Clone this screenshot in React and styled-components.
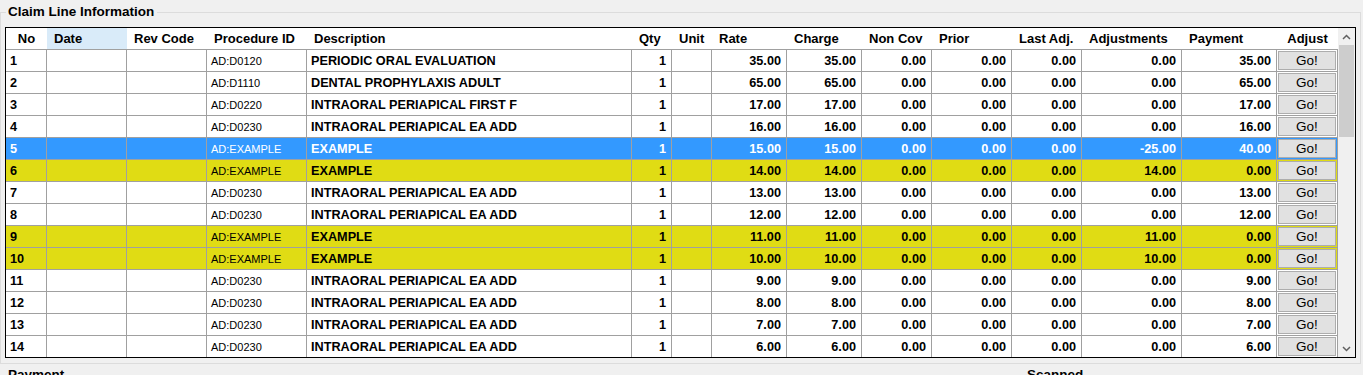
import React from "react";
import styled, { createGlobalStyle, css } from "styled-components";

const GlobalStyle = createGlobalStyle`
  html, body { margin: 0; padding: 0; }
  body {
    background: #f0f0f0;
    overflow: hidden;
    width: 1363px;
    height: 375px;
    font-family: "Liberation Sans", Arial, sans-serif;
    color: #000;
  }
`;

const COLS = "41px 80px 80px 100px 325px 40px 40px 75px 75px 70px 80px 70px 100px 95px 61px";

const Page = styled.div`
  display: flex;
  flex-direction: column;
`;

const GroupBox = styled.fieldset`
  margin: 4px 2px 0 0;
  padding: 7px 0 5px 4px;
  border: 1px solid #dcdcdc;
  min-width: 0;
`;

const Legend = styled.legend`
  margin-left: 1px;
  padding: 0 3px 0 2px;
  font-size: 13.5px;
  font-weight: bold;
  line-height: 16px;
`;

const GridFrame = styled.div`
  box-sizing: border-box;
  width: 1351px;
  height: 331px;
  border: 1px solid #000;
  background: #fff;
  display: flex;
  overflow: hidden;
`;

const Table = styled.div`
  width: 1332px;
  display: flex;
  flex-direction: column;
`;

const Row = styled.div`
  display: grid;
  grid-template-columns: ${COLS};
  height: 22px;
  flex: none;
  background: #fff;
  color: #000;
  ${(p) =>
    p.$variant === "selected" &&
    css`
      background: #3399ff;
      color: #fff;
    `}
  ${(p) =>
    p.$variant === "flagged" &&
    css`
      background: #e0dc14;
    `}
`;

const HeaderRow = styled.div`
  display: grid;
  grid-template-columns: ${COLS};
  height: 22px;
  flex: none;
  background: #fff;
`;

const HeaderCell = styled.div`
  box-sizing: border-box;
  border-bottom: 1px solid #a0a0a0;
  display: flex;
  align-items: center;
  justify-content: ${(p) => (p.$center ? "center" : "flex-start")};
  padding-left: ${(p) => (p.$center ? "0" : "7px")};
  font-size: 13px;
  font-weight: bold;
  white-space: nowrap;
  background: ${(p) => (p.$hover ? "#d9ebf9" : "transparent")};
`;

const Cell = styled.div`
  box-sizing: border-box;
  border-right: 1px solid #a0a0a0;
  border-bottom: 1px solid #a0a0a0;
  display: flex;
  align-items: center;
  justify-content: ${(p) => (p.$right ? "flex-end" : "flex-start")};
  padding: 0 5px 0 4px;
  font-size: ${(p) => (p.$small ? "11px" : "12.7px")};
  font-weight: ${(p) => (p.$small ? "normal" : "bold")};
  white-space: nowrap;
  overflow: hidden;
`;

const ButtonCell = styled.div`
  box-sizing: border-box;
  border-right: 1px solid #a0a0a0;
  border-bottom: 1px solid #a0a0a0;
  padding: 1px;
  display: flex;
`;

const GoButton = styled.button`
  flex: 1;
  margin: 0;
  padding: 0;
  border: 1px solid #adadad;
  background: #e1e1e1;
  font-family: "Liberation Sans", Arial, sans-serif;
  font-size: 13.5px;
  color: #000;
  line-height: 1;
`;

const ScrollBar = styled.div`
  width: 17px;
  flex: none;
  background: #f0f0f0;
  display: flex;
  flex-direction: column;
`;

const ScrollArrow = styled.div`
  height: 17px;
  flex: none;
  display: flex;
  align-items: center;
  justify-content: center;
`;

const Track = styled.div`
  flex: 1;
  display: flex;
  flex-direction: column;
`;

const Thumb = styled.div`
  margin: 0 1px;
  height: 92px;
  background: #cdcdcd;
`;

const BottomRow = styled.div`
  display: flex;
  gap: 4px;
  margin-top: 3px;
  margin-right: 2px;
`;

const BottomBox = styled.fieldset`
  margin: 0;
  padding: 0 0 0 4px;
  border: 1px solid #dcdcdc;
  height: 40px;
  min-width: 0;
  flex: ${(p) => (p.$grow ? 1 : "none")};
  width: ${(p) => p.$width || "auto"};
`;

const columns = [
  { label: "No", center: true },
  { label: "Date", hover: true },
  { label: "Rev Code" },
  { label: "Procedure ID" },
  { label: "Description" },
  { label: "Qty" },
  { label: "Unit" },
  { label: "Rate" },
  { label: "Charge" },
  { label: "Non Cov" },
  { label: "Prior" },
  { label: "Last Adj." },
  { label: "Adjustments" },
  { label: "Payment" },
  { label: "Adjust", center: true },
];

const rows = [
  ["AD:D0120", "PERIODIC ORAL EVALUATION", "35.00", "0.00", "35.00"],
  ["AD:D1110", "DENTAL PROPHYLAXIS ADULT", "65.00", "0.00", "65.00"],
  ["AD:D0220", "INTRAORAL PERIAPICAL FIRST F", "17.00", "0.00", "17.00"],
  ["AD:D0230", "INTRAORAL PERIAPICAL EA ADD", "16.00", "0.00", "16.00"],
  ["AD:EXAMPLE", "EXAMPLE", "15.00", "-25.00", "40.00", "selected"],
  ["AD:EXAMPLE", "EXAMPLE", "14.00", "14.00", "0.00", "flagged"],
  ["AD:D0230", "INTRAORAL PERIAPICAL EA ADD", "13.00", "0.00", "13.00"],
  ["AD:D0230", "INTRAORAL PERIAPICAL EA ADD", "12.00", "0.00", "12.00"],
  ["AD:EXAMPLE", "EXAMPLE", "11.00", "11.00", "0.00", "flagged"],
  ["AD:EXAMPLE", "EXAMPLE", "10.00", "10.00", "0.00", "flagged"],
  ["AD:D0230", "INTRAORAL PERIAPICAL EA ADD", "9.00", "0.00", "9.00"],
  ["AD:D0230", "INTRAORAL PERIAPICAL EA ADD", "8.00", "0.00", "8.00"],
  ["AD:D0230", "INTRAORAL PERIAPICAL EA ADD", "7.00", "0.00", "7.00"],
  ["AD:D0230", "INTRAORAL PERIAPICAL EA ADD", "6.00", "0.00", "6.00"],
];

const Chevron = ({ up }) => (
  <svg width="9" height="6" viewBox="0 0 9 6">
    <path
      d={up ? "M1 5 L4.5 1.5 L8 5" : "M1 1 L4.5 4.5 L8 1"}
      fill="none"
      stroke="#606060"
      strokeWidth="1.5"
    />
  </svg>
);

export default function App() {
  return (
    <Page>
      <GlobalStyle />
      <GroupBox>
        <Legend>Claim Line Information</Legend>
        <GridFrame>
          <Table>
            <HeaderRow>
              {columns.map((c) => (
                <HeaderCell key={c.label} $center={c.center} $hover={c.hover}>
                  {c.label}
                </HeaderCell>
              ))}
            </HeaderRow>
            {rows.map(([proc, desc, amt, adj, pay, variant], i) => (
              <Row key={i} $variant={variant}>
                <Cell>{i + 1}</Cell>
                <Cell />
                <Cell />
                <Cell $small>{proc}</Cell>
                <Cell>{desc}</Cell>
                <Cell $right>1</Cell>
                <Cell />
                <Cell $right>{amt}</Cell>
                <Cell $right>{amt}</Cell>
                <Cell $right>0.00</Cell>
                <Cell $right>0.00</Cell>
                <Cell $right>0.00</Cell>
                <Cell $right>{adj}</Cell>
                <Cell $right>{pay}</Cell>
                <ButtonCell>
                  <GoButton>Go!</GoButton>
                </ButtonCell>
              </Row>
            ))}
          </Table>
          <ScrollBar>
            <ScrollArrow>
              <Chevron up />
            </ScrollArrow>
            <Track>
              <Thumb />
            </Track>
            <ScrollArrow>
              <Chevron />
            </ScrollArrow>
          </ScrollBar>
        </GridFrame>
      </GroupBox>
      <BottomRow>
        <BottomBox $grow>
          <Legend>Payment</Legend>
        </BottomBox>
        <BottomBox $width="336px">
          <Legend>Scanned</Legend>
        </BottomBox>
      </BottomRow>
    </Page>
  );
}
